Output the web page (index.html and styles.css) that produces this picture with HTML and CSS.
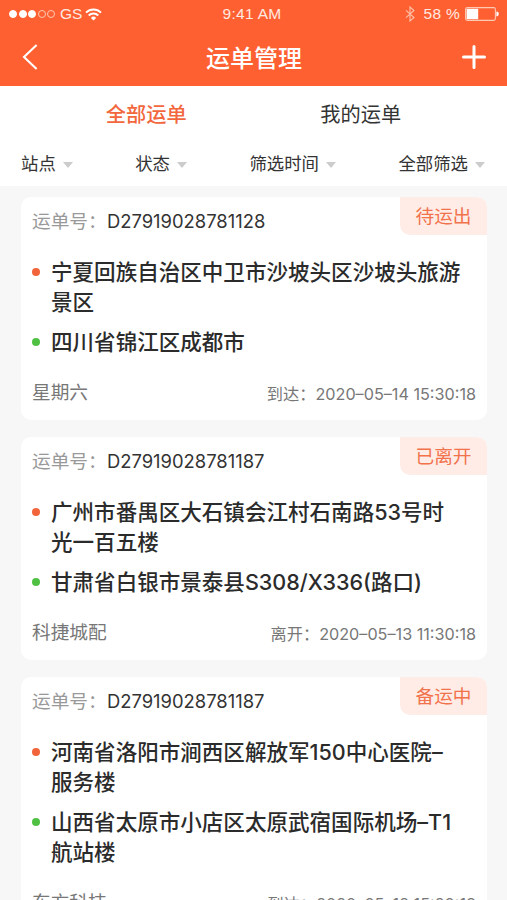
FILE: index.html
```html
<!DOCTYPE html>
<html lang="zh-CN">
<head>
    <meta charset="UTF-8">
    <meta name="viewport" content="width=device-width, initial-scale=1.0">
    <title>运单管理</title>
    <link rel="stylesheet" href="styles.css">
</head>
<body>
    <header class="header">
        <div class="status-bar">
            <div class="status-left">
                <div class="signal">
                    <span class="full"></span>
                    <span class="full"></span>
                    <span class="full"></span>
                    <span></span>
                    <span></span>
                </div>
                <span class="carrier">GS</span>
                <svg class="wifi" width="17" height="13" viewBox="0 0 17 13" fill="none" stroke="#fff" stroke-width="1.9">
                    <path d="M1 4.6a10.6 10.6 0 0 1 15 0"/>
                    <path d="M3.7 7.5a6.8 6.8 0 0 1 9.6 0"/>
                    <path d="M8.5 12.6L5.9 9.9a3.7 3.7 0 0 1 5.2 0z" fill="#fff" stroke="none"/>
                </svg>
            </div>
            <span class="clock">9:41 AM</span>
            <div class="status-right">
                <svg width="10" height="16" viewBox="0 0 10 16" fill="none" stroke="#ffc0a8" stroke-width="1.1">
                    <path d="M1 4.3l8 7.2L5 15V1l4 3.5-8 7.2"/>
                </svg>
                <span class="percent">58 %</span>
                <svg width="34" height="14" viewBox="0 0 34 14">
                    <rect x="0.6" y="0.6" width="29.8" height="12.8" rx="1.8" fill="none" stroke="#ffc9b4" stroke-width="1.1"/>
                    <rect x="1.6" y="1.8" width="11.6" height="10.4" fill="#fff"/>
                    <path d="M31.4 4.6a2.4 2.4 0 0 1 0 4.8z" fill="#fff"/>
                </svg>
            </div>
        </div>
        <nav class="nav">
            <svg width="16" height="26" viewBox="0 0 16 26" fill="none" stroke="#fff" stroke-width="2.1">
                <path d="M14.6 1L2 13l12.6 12"/>
            </svg>
            <h1>运单管理</h1>
            <svg width="24" height="24" viewBox="0 0 24 24" stroke="#fff" stroke-width="3" stroke-linecap="round">
                <path d="M12 1.5v21M1.5 12h21"/>
            </svg>
        </nav>
    </header>

    <div class="tabs">
        <a class="tab active">全部运单</a>
        <a class="tab">我的运单</a>
    </div>
    <div class="filters">
        <span class="filter">站点</span>
        <span class="filter">状态</span>
        <span class="filter">筛选时间</span>
        <span class="filter">全部筛选</span>
    </div>

    <main class="list">
        <section class="card">
            <div class="card-top">
                <span class="label">运单号：</span>
                <span class="number">D27919028781128</span>
                <span class="tag">待运出</span>
            </div>
            <p class="address from">宁夏回族自治区中卫市沙坡头区沙坡头旅游<br>景区</p>
            <p class="address to">四川省锦江区成都市</p>
            <div class="card-bottom">
                <span class="company">星期六</span>
                <span class="time">到达：<span class="date">2020–05–14 15:30:18</span></span>
            </div>
        </section>

        <section class="card">
            <div class="card-top">
                <span class="label">运单号：</span>
                <span class="number">D27919028781187</span>
                <span class="tag">已离开</span>
            </div>
            <p class="address from">广州市番禺区大石镇会江村石南路53号时<br>光一百五楼</p>
            <p class="address to">甘肃省白银市景泰县S308/X336(路口)</p>
            <div class="card-bottom">
                <span class="company">科捷城配</span>
                <span class="time">离开：<span class="date">2020–05–13 11:30:18</span></span>
            </div>
        </section>

        <section class="card">
            <div class="card-top">
                <span class="label">运单号：</span>
                <span class="number">D27919028781187</span>
                <span class="tag">备运中</span>
            </div>
            <p class="address from">河南省洛阳市涧西区解放军150中心医院–<br>服务楼</p>
            <p class="address to">山西省太原市小店区太原武宿国际机场–T1<br>航站楼</p>
            <div class="card-bottom">
                <span class="company">东方科技</span>
                <span class="time">到达：<span class="date">2020–05–12 15:20:18</span></span>
            </div>
        </section>
    </main>
</body>
</html>
```
FILE: styles.css
```css
* {
    box-sizing: border-box;
}

body {
    margin: 0;
    height: 900px;
    overflow: hidden;
    background-color: #f7f7f7;
    color: #333;
    font-family: Inter, "Noto Sans CJK SC", sans-serif;
}

.header {
    height: 86px;
    background-color: #ff6032;
    color: #fff;
}

.status-bar {
    display: grid;
    grid-template-columns: 1fr auto 1fr;
    align-items: center;
    height: 28px;
    padding: 0 8px 0 9px;
    font-family: "Liberation Sans", Arial, sans-serif;
    font-size: 15.5px;
    color: #ffe9e0;
}

.clock {
    margin-right: 4px;
    letter-spacing: 0.3px;
}

.status-left, .status-right {
    display: flex;
    align-items: center;
}

.status-right {
    justify-content: flex-end;
}

.signal {
    display: flex;
    gap: 1.5px;
}

.signal span {
    width: 8px;
    height: 8px;
    border: 1px solid #ffc9b4;
    border-radius: 50%;
}

.signal .full {
    background-color: #fff;
    border-color: #fff;
}

.carrier {
    margin-left: 5px;
}

.wifi {
    margin-left: 3px;
}

.percent {
    margin: 0 5px 0 8px;
    letter-spacing: 0.3px;
}

.nav {
    display: flex;
    align-items: center;
    justify-content: space-between;
    height: 58px;
    padding: 0 21px 0 22px;
}

h1 {
    margin: 0;
    padding: 3px 0 0 8px;
    font-size: 24px;
    font-weight: 500;
    line-height: 36px;
}

.tabs {
    display: grid;
    grid-template-columns: 1fr 1fr;
    height: 56px;
    padding: 0 39px;
    background-color: #fff;
}

.tab {
    font-size: 20.2px;
    line-height: 58px;
    text-align: center;
}

.active {
    color: #f2673d;
    font-weight: 500;
}

.filters {
    display: flex;
    justify-content: space-between;
    height: 44px;
    padding: 0 22px 0 21px;
    background-color: #fff;
    font-size: 17.4px;
    line-height: 46px;
}

.filter {
    display: flex;
    align-items: center;
}

.filter::after {
    content: "";
    margin: 2px 0 0 7px;
    border: 5px solid transparent;
    border-top: 6px solid #ccc;
    border-bottom: 0;
}

.list {
    display: flex;
    flex-direction: column;
    gap: 17px;
    padding: 11px 20px 0 21px;
}

.card {
    padding-bottom: 13px;
    background-color: #fff;
    border-radius: 10px;
}

.card-top {
    display: flex;
    height: 60px;
    padding-left: 11px;
    font-size: 18.7px;
    line-height: 50px;
}

.label {
    width: 75px;
    color: #999;
    white-space: nowrap;
}

.number {
    font-size: 18.4px;
    line-height: 49px;
}

.tag {
    width: 87px;
    height: 38px;
    margin-left: auto;
    border-radius: 0 10px 0 10px;
    background-color: #ffece6;
    color: #f2724c;
    line-height: 40px;
    text-align: center;
}

.address {
    display: grid;
    grid-template-columns: 19px auto;
    margin: 0 0 10px;
    padding-left: 11px;
    color: #2b2b2b;
    font-size: 21.55px;
    font-weight: 500;
    line-height: 30px;
    white-space: nowrap;
}

.address::before {
    content: "";
    grid-row: 1 / 3;
    width: 8px;
    height: 8px;
    margin-top: 11px;
    border-radius: 50%;
    background-color: #f2643a;
}

.to::before {
    background-color: #4fc043;
}

.card-bottom {
    display: flex;
    justify-content: space-between;
    height: 40px;
    padding: 0 11px;
    color: #777;
    font-size: 18.7px;
    line-height: 52px;
}

.time {
    font-size: 16.2px;
    line-height: 54px;
}
```
